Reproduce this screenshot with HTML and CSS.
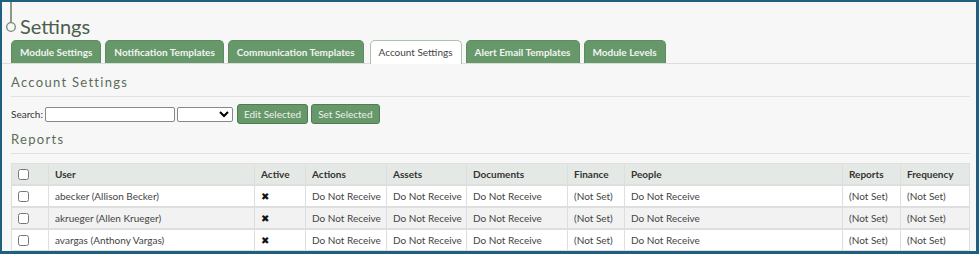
FILE: index.html
```html
<!DOCTYPE html>
<html lang="en">
<head>
    <meta charset="UTF-8">
    <meta name="viewport" content="width=device-width, initial-scale=1.0">
    <title>Settings</title>
    <link rel="stylesheet" href="styles.css">
</head>
<body>
    <div class="frame">
        <div class="page-title">
            <svg class="timeline" width="14" height="34" viewBox="0 0 14 34">
                <line x1="8" y1="0" x2="8" y2="20" stroke="#5f7d60" stroke-width="1.5"/>
                <circle cx="8" cy="25" r="4.3" fill="none" stroke="#6f8d70" stroke-width="1.3"/>
            </svg>
            <h1>Settings</h1>
        </div>

        <div class="tabs">
            <div class="tab">Module Settings</div>
            <div class="tab">Notification Templates</div>
            <div class="tab">Communication Templates</div>
            <div class="tab active">Account Settings</div>
            <div class="tab">Alert Email Templates</div>
            <div class="tab">Module Levels</div>
        </div>

        <div class="content">
            <h2>Account Settings</h2>

            <div class="search-row">
                <label for="search">Search:</label>
                <input type="text" id="search">
                <select>
                    <option></option>
                </select>
                <button>Edit Selected</button>
                <button>Set Selected</button>
            </div>

            <h2 class="reports">Reports</h2>

            <table class="grid">
                <thead>
                    <tr>
                        <th class="col-check"><input type="checkbox"></th>
                        <th class="col-user">User</th>
                        <th class="col-active">Active</th>
                        <th class="col-actions">Actions</th>
                        <th class="col-assets">Assets</th>
                        <th class="col-docs">Documents</th>
                        <th class="col-finance">Finance</th>
                        <th class="col-people">People</th>
                        <th class="col-reports">Reports</th>
                        <th class="col-freq">Frequency</th>
                    </tr>
                </thead>
                <tbody>
                    <tr>
                        <td class="col-check"><input type="checkbox"></td>
                        <td>abecker (Allison Becker)</td>
                        <td class="x">&#10006;</td>
                        <td>Do Not Receive</td>
                        <td>Do Not Receive</td>
                        <td>Do Not Receive</td>
                        <td>(Not Set)</td>
                        <td>Do Not Receive</td>
                        <td>(Not Set)</td>
                        <td>(Not Set)</td>
                    </tr>
                    <tr>
                        <td class="col-check"><input type="checkbox"></td>
                        <td>akrueger (Allen Krueger)</td>
                        <td class="x">&#10006;</td>
                        <td>Do Not Receive</td>
                        <td>Do Not Receive</td>
                        <td>Do Not Receive</td>
                        <td>(Not Set)</td>
                        <td>Do Not Receive</td>
                        <td>(Not Set)</td>
                        <td>(Not Set)</td>
                    </tr>
                    <tr>
                        <td class="col-check"><input type="checkbox"></td>
                        <td>avargas (Anthony Vargas)</td>
                        <td class="x">&#10006;</td>
                        <td>Do Not Receive</td>
                        <td>Do Not Receive</td>
                        <td>Do Not Receive</td>
                        <td>(Not Set)</td>
                        <td>Do Not Receive</td>
                        <td>(Not Set)</td>
                        <td>(Not Set)</td>
                    </tr>
                </tbody>
            </table>
        </div>
    </div>
</body>
</html>
```

FILE: styles.css
```css
body {
    margin: 0;
    padding: 0;
    font-family: Lato, "Open Sans", sans-serif;
    color: #333;
    background-color: #f7f7f7;
}
.frame {
    box-sizing: border-box;
    width: 979px;
    height: 254px;
    overflow: hidden;
    border-style: solid;
    border-color: #1f5f7f;
    border-width: 2px 3px 3px 2px;
    background-color: #f7f7f7;
}
.page-title {
    display: flex;
    align-items: flex-start;
    height: 38px;
}
.timeline {
    margin-left: 1px;
    flex: none;
}
.page-title h1 {
    margin: 12px 0 0 3px;
    font-size: 20px;
    font-weight: normal;
    color: #4b5d4b;
    line-height: 24px;
}
.tabs {
    display: flex;
    gap: 4px;
    padding-left: 9px;
    border-bottom: 1px solid #dcdcdc;
    height: 23px;
}
.tab {
    height: 23px;
    box-sizing: border-box;
    padding: 0 8px;
    line-height: 23px;
    font-size: 10px;
    font-weight: bold;
    color: #f2f4f2;
    background-color: #66986a;
    border-radius: 5px 5px 0 0;
    border: 1px solid #5d8c61;
    border-bottom: none;
    white-space: nowrap;
}
.tab.active {
    background-color: #fff;
    color: #444;
    font-weight: normal;
    border-color: #a9c2aa;
    height: 24px;
    margin-left: 2px;
    padding: 0 8px;
}
.content {
    padding: 0 6px 0 9px;
}
.content h2 {
    margin: 0;
    padding: 10px 0 5px 0;
    font-size: 13px;
    font-weight: normal;
    letter-spacing: 1.3px;
    color: #5a6d5a;
    border-bottom: 1px solid #e2e2e2;
    line-height: 17px;
}
.content h2.reports {
    padding-top: 5px;
}
.search-row {
    display: flex;
    align-items: center;
    gap: 2px;
    padding: 7px 0 2px 0;
    font-size: 10px;
    color: #333;
}
.search-row input {
    width: 130px;
    height: 15px;
    box-sizing: border-box;
    border: 1px solid #888;
    border-radius: 2px;
    padding: 0 2px;
    margin: 0;
    background: #fff;
}
.search-row select {
    width: 56px;
    height: 15px;
    box-sizing: border-box;
    border: 1px solid #888;
    border-radius: 2px;
    margin: 0 1px 0 0;
    padding: 0;
    background: #fff;
    font-size: 10px;
}
.search-row button {
    height: 20px;
    padding: 0 6px;
    font-family: Lato, "Open Sans", sans-serif;
    font-size: 10px;
    color: #eef2ee;
    background-color: #66986a;
    border: 1px solid #4f7d53;
    border-radius: 3px;
    margin-left: 1px;
}
.grid {
    margin-top: 9px;
    width: 958px;
    border-collapse: collapse;
    table-layout: fixed;
    font-size: 10px;
    border: 1px solid #dedede;
}
.grid th,
.grid td {
    border: 1px solid #dedede;
    border-width: 0 1px 2px 1px;
    height: 20px;
    padding: 0 6px;
    text-align: left;
    white-space: nowrap;
    overflow: hidden;
    color: #444;
}
.grid th {
    background-color: #e5e9e5;
    font-weight: bold;
    color: #333;
}
.grid tbody tr:nth-child(even) td {
    background-color: #f2f2f2;
}
.grid tbody tr:nth-child(odd) td {
    background-color: #fff;
}
.grid input[type="checkbox"] {
    margin: 0;
    width: 11px;
    height: 11px;
    vertical-align: middle;
}
.grid .x {
    font-size: 10px;
    color: #111;
}
.col-check { width: 24px; text-align: center; }
.col-user { width: 193px; }
.col-active { width: 38px; }
.col-actions { width: 68px; }
.col-assets { width: 67px; }
.col-docs { width: 88px; }
.col-finance { width: 44px; }
.col-people { width: 205px; }
.col-reports { width: 45px; }
.col-freq { width: 56px; }
```
